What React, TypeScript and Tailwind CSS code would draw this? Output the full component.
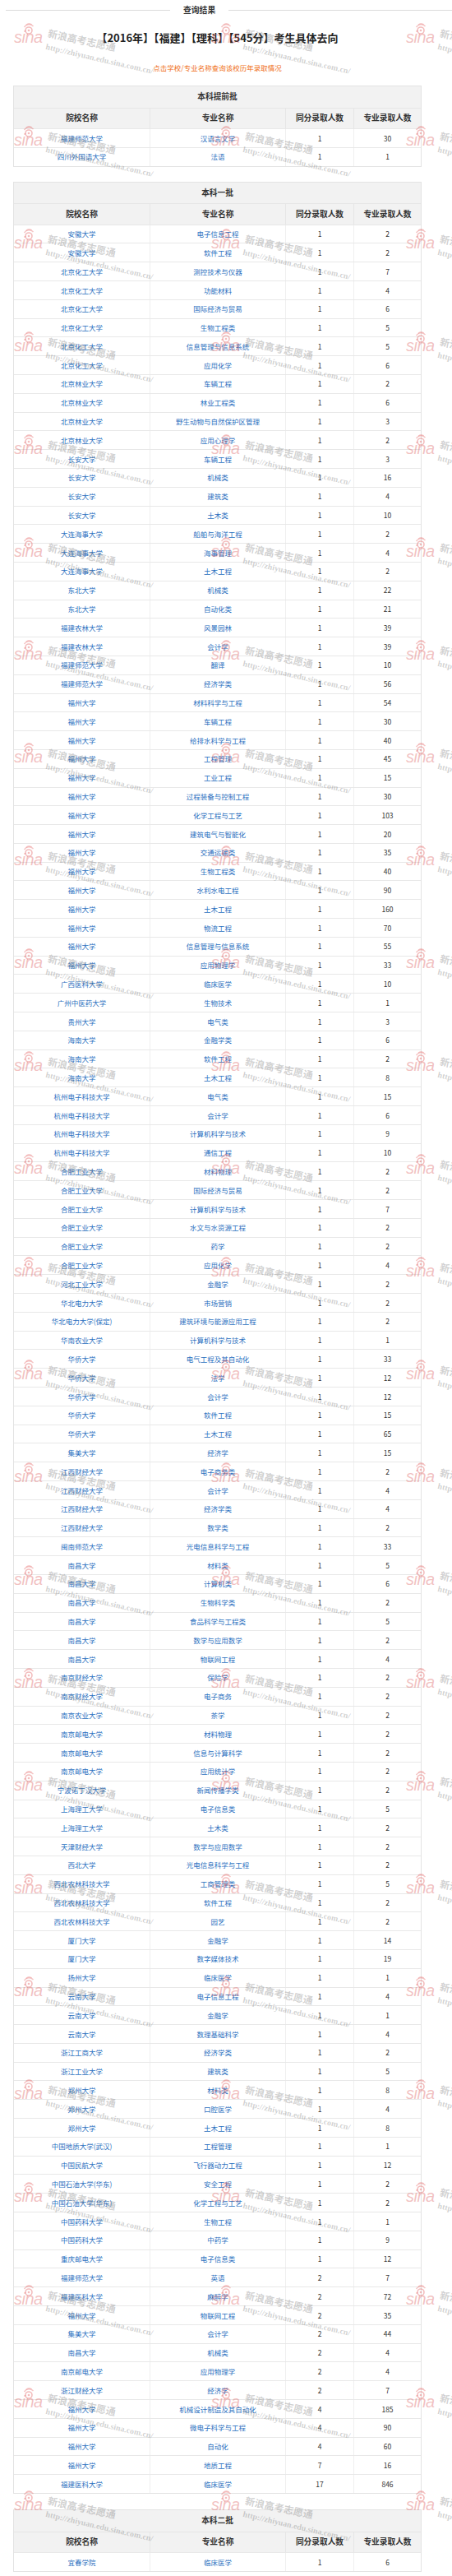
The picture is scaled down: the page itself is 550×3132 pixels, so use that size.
import React from "react";

type Row = [string, string, string, string];

const parse = (s: string): Row[] =>
  s
    .trim()
    .split("\n")
    .map((l) => l.trim().split("|") as Row);

const sec1 = parse(`福建师范大学|汉语言文学|1|30
四川外国语大学|法语|1|1`);

const sec2 = parse(`安徽大学|电子信息工程|1|2
安徽大学|软件工程|1|2
北京化工大学|测控技术与仪器|1|7
北京化工大学|功能材料|1|4
北京化工大学|国际经济与贸易|1|6
北京化工大学|生物工程类|1|5
北京化工大学|信息管理与信息系统|1|5
北京化工大学|应用化学|1|6
北京林业大学|车辆工程|1|2
北京林业大学|林业工程类|1|6
北京林业大学|野生动物与自然保护区管理|1|3
北京林业大学|应用心理学|1|2
长安大学|车辆工程|1|3
长安大学|机械类|1|16
长安大学|建筑类|1|4
长安大学|土木类|1|10
大连海事大学|船舶与海洋工程|1|2
大连海事大学|海事管理|1|4
大连海事大学|土木工程|1|2
东北大学|机械类|1|22
东北大学|自动化类|1|21
福建农林大学|风景园林|1|39
福建农林大学|会计学|1|39
福建师范大学|翻译|1|10
福建师范大学|经济学类|1|56
福州大学|材料科学与工程|1|54
福州大学|车辆工程|1|30
福州大学|给排水科学与工程|1|40
福州大学|工程管理|1|45
福州大学|工业工程|1|15
福州大学|过程装备与控制工程|1|30
福州大学|化学工程与工艺|1|103
福州大学|建筑电气与智能化|1|20
福州大学|交通运输类|1|35
福州大学|生物工程类|1|40
福州大学|水利水电工程|1|90
福州大学|土木工程|1|160
福州大学|物流工程|1|70
福州大学|信息管理与信息系统|1|55
福州大学|应用物理学|1|33
广西医科大学|临床医学|1|10
广州中医药大学|生物技术|1|1
贵州大学|电气类|1|3
海南大学|金融学类|1|6
海南大学|软件工程|1|2
海南大学|土木工程|1|8
杭州电子科技大学|电气类|1|15
杭州电子科技大学|会计学|1|6
杭州电子科技大学|计算机科学与技术|1|9
杭州电子科技大学|通信工程|1|10
合肥工业大学|材料物理|1|2
合肥工业大学|国际经济与贸易|1|2
合肥工业大学|计算机科学与技术|1|7
合肥工业大学|水文与水资源工程|1|2
合肥工业大学|药学|1|2
合肥工业大学|应用化学|1|4
河北工业大学|金融学|1|2
华北电力大学|市场营销|1|2
华北电力大学(保定)|建筑环境与能源应用工程|1|2
华南农业大学|计算机科学与技术|1|1
华侨大学|电气工程及其自动化|1|33
华侨大学|法学|1|12
华侨大学|会计学|1|12
华侨大学|软件工程|1|15
华侨大学|土木工程|1|65
集美大学|经济学|1|15
江西财经大学|电子商务类|1|2
江西财经大学|会计学|1|4
江西财经大学|经济学类|1|4
江西财经大学|数学类|1|2
闽南师范大学|光电信息科学与工程|1|33
南昌大学|材料类|1|5
南昌大学|计算机类|1|6
南昌大学|生物科学类|1|2
南昌大学|食品科学与工程类|1|5
南昌大学|数学与应用数学|1|2
南昌大学|物联网工程|1|4
南京财经大学|保险学|1|2
南京财经大学|电子商务|1|2
南京农业大学|茶学|1|2
南京邮电大学|材料物理|1|2
南京邮电大学|信息与计算科学|1|2
南京邮电大学|应用统计学|1|2
宁波诺丁汉大学|新闻传播学类|1|2
上海理工大学|电子信息类|1|5
上海理工大学|土木类|1|2
天津财经大学|数学与应用数学|1|2
西北大学|光电信息科学与工程|1|2
西北农林科技大学|工商管理类|1|5
西北农林科技大学|软件工程|1|2
西北农林科技大学|园艺|1|2
厦门大学|金融学|1|14
厦门大学|数字媒体技术|1|19
扬州大学|临床医学|1|1
云南大学|电子信息工程|1|4
云南大学|金融学|1|1
云南大学|数理基础科学|1|4
浙江工商大学|经济学类|1|2
浙江工业大学|建筑类|1|5
郑州大学|材料类|1|8
郑州大学|口腔医学|1|4
郑州大学|土木工程|1|8
中国地质大学(武汉)|工程管理|1|1
中国民航大学|飞行器动力工程|1|12
中国石油大学(华东)|安全工程|1|2
中国石油大学(华东)|化学工程与工艺|1|2
中国药科大学|生物工程|1|1
中国药科大学|中药学|1|9
重庆邮电大学|电子信息类|1|12
福建师范大学|英语|2|7
福建医科大学|麻醉学|2|72
福州大学|物联网工程|2|35
集美大学|会计学|2|44
南昌大学|机械类|2|4
南京邮电大学|应用物理学|2|4
浙江财经大学|经济学|2|7
福州大学|机械设计制造及其自动化|4|185
福州大学|微电子科学与工程|4|90
福州大学|自动化|4|60
福州大学|地质工程|7|16
福建医科大学|临床医学|17|846`);

const sec3 = parse(`宜春学院|临床医学|1|6`);

const heads = ["院校名称", "专业名称", "同分录取人数", "专业录取人数"];

function Section({ title, rows }: { title: string; rows: Row[] }) {
  return (
    <div className="border border-[#e3e3e3] bg-white">
      <div className="h-[25.5px] bg-[#f2f2f2] flex items-center justify-center text-[9.7px] font-bold text-[#333]">
        {title}
      </div>
      <div className="grid grid-cols-[165px_165px_83px_82px] h-[25.5px] bg-[#f2f2f2] border-t border-[#e6e6e6] text-[9.7px] font-bold text-[#333]">
        {heads.map((h, i) => (
          <div
            key={i}
            className={
              i === 0
                ? "flex items-center justify-center"
                : "flex items-center justify-center border-l border-[#e6e6e6]"
            }
          >
            {h}
          </div>
        ))}
      </div>
      {rows.map((r, ri) => (
        <div
          key={ri}
          className="grid grid-cols-[165px_165px_83px_82px] h-[22.8px] border-t border-[#e8e8e8] text-[8.5px]"
        >
          <div className="flex items-center justify-center text-[#2a6fc0] whitespace-nowrap">{r[0]}</div>
          <div className="flex items-center justify-center text-[#2a6fc0] border-l border-[#efefef] whitespace-nowrap">
            {r[1]}
          </div>
          <div className="flex items-center justify-center text-[#333] border-l border-[#efefef]">{r[2]}</div>
          <div className="flex items-center justify-center text-[#333] border-l border-[#efefef]">{r[3]}</div>
        </div>
      ))}
    </div>
  );
}

function Watermark({ x, y }: { x: number; y: number }) {
  return (
    <div className="absolute w-[240px] h-[80px]" style={{ left: x, top: y }}>
      <svg className="absolute left-[10px] top-0" width="17" height="15" viewBox="0 0 17 15">
        <circle cx="8" cy="9" r="4" fill="none" stroke="rgba(225,90,90,0.4)" strokeWidth="1.6" />
        <circle cx="8" cy="9" r="1.3" fill="rgba(225,90,90,0.4)" />
        <path d="M2.5 5 A7 7 0 0 1 13.5 4" fill="none" stroke="rgba(225,90,90,0.35)" strokeWidth="1.4" />
        <path d="M5 2.2 A5 5 0 0 1 11.5 1.8" fill="none" stroke="rgba(225,90,90,0.3)" strokeWidth="1.2" />
      </svg>
      <div className="absolute left-0 top-[7px] text-[20px] leading-[20px] italic font-['Liberation_Sans',sans-serif] text-[rgba(220,90,90,0.38)] tracking-[-0.5px]">
        sina
      </div>
      <div className="absolute left-[43px] top-[5px] whitespace-nowrap text-[12px] leading-[14px] font-bold text-[rgba(110,110,110,0.33)] rotate-[12deg] origin-top-left">
        新浪高考志愿通
      </div>
      <div className="absolute left-[40px] top-[23px] whitespace-nowrap text-[10px] leading-[12px] font-bold font-['Liberation_Serif',serif] text-[rgba(110,110,110,0.33)] rotate-[13deg] origin-top-left">
        http://zhiyuan.edu.sina.com.cn/
      </div>
    </div>
  );
}

export default function App() {
  const marks: { x: number; y: number }[] = [];
  for (let n = 0; n < 25; n++) {
    for (const x of [17, 257, 494]) marks.push({ x, y: 28 + 125 * n });
  }
  return (
    <div className="relative w-[550px] h-[3132px] overflow-hidden bg-white font-['Noto_Sans_CJK_SC',sans-serif]">
      <div className="h-[25px] flex items-center">
        <div className="ml-[7px] w-[200px] h-px bg-[#dcdcdc]" />
        <div className="mx-[16px] text-[9.8px] font-bold text-[#333]">查询结果</div>
        <div className="flex-1 h-px bg-[#dcdcdc]" />
      </div>
      <div className="ml-[16px] w-[497px]">
        <div className="mt-[11px] text-center text-[13px] leading-[20px] font-bold text-[#222]">
          【2016年】【福建】【理科】【545分】考生具体去向
        </div>
        <div className="mt-[20px] text-center text-[8.5px] leading-[12px] text-[#f07020]">
          点击学校/专业名称查询该校历年录取情况
        </div>
        <div className="mt-[16px]">
          <Section title="本科提前批" rows={sec1} />
        </div>
        <div className="mt-[18px]">
          <Section title="本科一批" rows={sec2} />
        </div>
        <div className="mt-[19px]">
          <Section title="本科二批" rows={sec3} />
        </div>
      </div>
      <div className="absolute inset-0 pointer-events-none">
        {marks.map((m, i) => (
          <Watermark key={i} x={m.x} y={m.y} />
        ))}
      </div>
    </div>
  );
}
